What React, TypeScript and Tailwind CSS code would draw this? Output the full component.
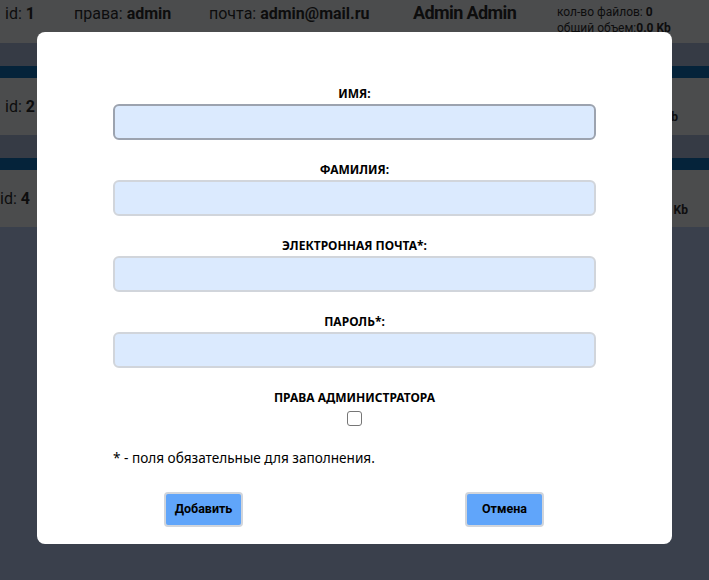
import React from "react";

const hdr = { fontFamily: 'Roboto, "Noto Sans", sans-serif' };
const frm = { fontFamily: '"Noto Sans", "DejaVu Sans", sans-serif' };

function Field({ label, focused }: { label: string; focused?: boolean }) {
  return (
    <div className="flex flex-col items-center">
      <div className="h-[16px] text-[12px] leading-[16px] font-bold text-black">{label}</div>
      <div
        className={
          "mt-[2px] h-[36px] w-full rounded-[6px] border-2 bg-[#dbeafe] " +
          (focused ? "border-[#9ca3af]" : "border-[#d1d5db]")
        }
      />
    </div>
  );
}

export default function App() {
  return (
    <div className="relative h-[580px] w-[709px] overflow-hidden bg-[#3a404c] text-[#0d0d0d]" style={hdr}>
      {/* row 1 */}
      <div className="relative flex h-[43px] bg-[#4b4c4d]">
        <div className="absolute left-[5px] top-[3px] text-[16px] leading-[22px]">
          id: <b>1</b>
        </div>
        <div className="absolute left-[74px] top-[3px] text-[16px] leading-[22px]">
          права: <b>admin</b>
        </div>
        <div className="absolute left-[209px] top-[3px] text-[16px] leading-[22px]">
          почта: <b>admin@mail.ru</b>
        </div>
        <div className="absolute left-[413px] top-[1px] text-[18px] leading-[24px] font-bold tracking-[-0.6px]">
          Admin Admin
        </div>
        <div className="absolute left-[557px] top-[4px] text-[12px] leading-[16px]">
          <div>
            кол-во файлов: <b>0</b>
          </div>
          <div>
            общий объем:<b>0.0 Kb</b>
          </div>
        </div>
      </div>
      <div className="h-[23px] bg-[#363b45]" />
      <div className="h-[12px] bg-[#05233a]" />
      {/* row 2 */}
      <div className="relative flex h-[57px] items-center bg-[#4b4c4d]">
        <div className="ml-[5px] text-[16px] leading-[22px]">
          id: <b>2</b>
        </div>
        <div className="absolute right-[31px] top-[30px] text-[12px] font-bold">0.0 Kb</div>
      </div>
      <div className="h-[23px] bg-[#363b45]" />
      <div className="h-[12px] bg-[#05233a]" />
      {/* row 3 */}
      <div className="relative flex h-[57px] items-center bg-[#4b4c4d]">
        <div className="ml-[0px] text-[16px] leading-[22px]">
          id: <b>4</b>
        </div>
        <div className="absolute right-[21px] top-[31px] text-[12px] font-bold">0.0 Kb</div>
      </div>

      {/* modal */}
      <div
        className="absolute left-[37px] top-[32px] flex h-[512px] w-[635px] flex-col rounded-[8px] bg-white px-[76px] pt-[54px]"
        style={frm}
      >
        <div className="flex flex-col gap-[22px]">
          <Field label="ИМЯ:" focused />
          <Field label="ФАМИЛИЯ:" />
          <Field label="ЭЛЕКТРОННАЯ ПОЧТА*:" />
          <Field label="ПАРОЛЬ*:" />
        </div>
        <div className="mt-[22px] flex flex-col items-center">
          <div className="h-[16px] text-[12px] leading-[16px] font-bold text-black">ПРАВА АДМИНИСТРАТОРА</div>
          <div className="mt-[5px] h-[15px] w-[15px] rounded-[3px] border border-[#767676] bg-white" />
        </div>
        <div className="mt-[22px] text-[13.6px] leading-[20px] text-black">* - поля обязательные для заполнения.</div>
        <div className="mt-[24px] flex justify-between pl-[51px] pr-[52px]" style={hdr}>
          <button className="h-[35px] w-[79px] rounded-[4px] border-2 border-[#d1d5db] bg-[#60a5fa] text-[12.5px] font-bold text-black">
            Добавить
          </button>
          <button className="h-[35px] w-[79px] rounded-[4px] border-2 border-[#d1d5db] bg-[#60a5fa] text-[12.5px] font-bold text-black">
            Отмена
          </button>
        </div>
      </div>
    </div>
  );
}
